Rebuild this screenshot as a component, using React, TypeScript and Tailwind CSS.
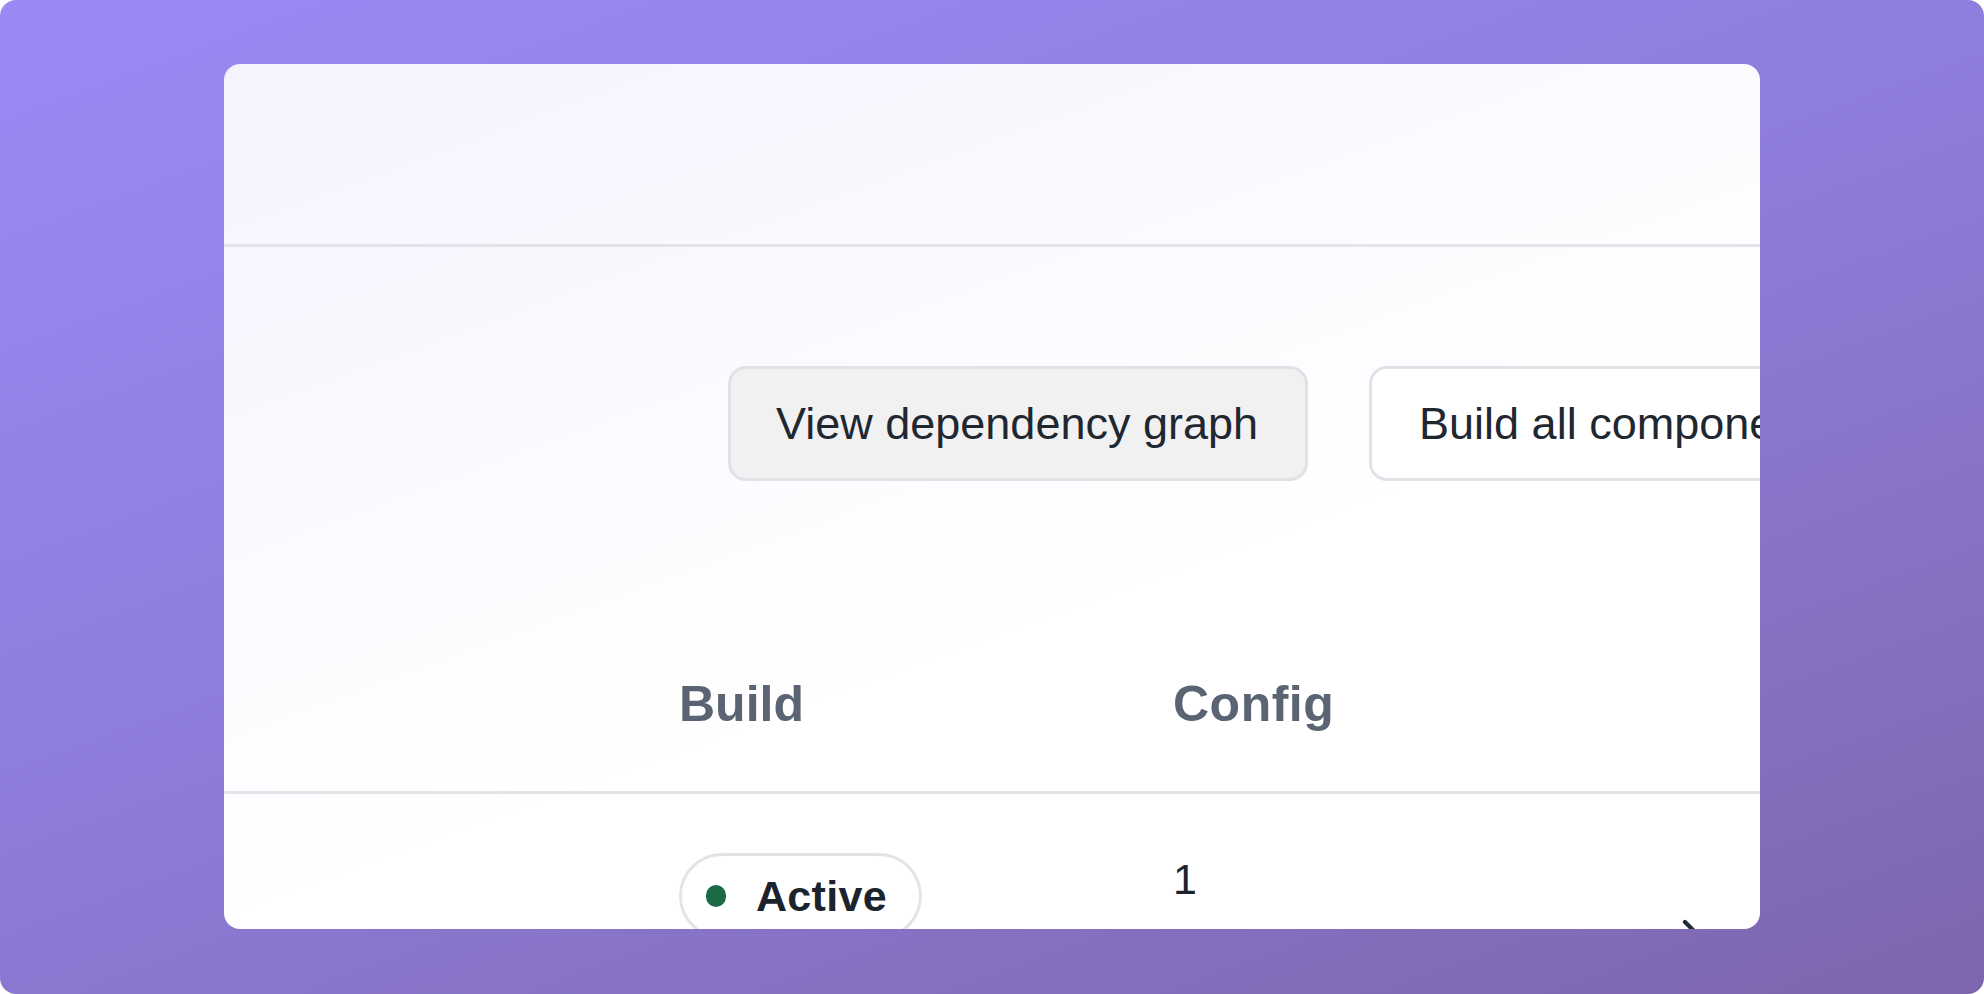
import React from 'react';

const ChevronRight: React.FC = () => (
  <svg width="40" height="40" viewBox="0 0 24 24" fill="none" stroke="#1f2933" strokeWidth="2.5" strokeLinecap="round" strokeLinejoin="round">
    <path d="m9 18 6-6-6-6" />
  </svg>
);

const App: React.FC = () => {
  return (
    <div className="w-[1984px] h-[994px] bg-white overflow-hidden font-['Liberation_Sans',Arial,sans-serif]">
      <div className="w-full h-full rounded-[16px] bg-[linear-gradient(160deg,#9a8af5_0%,#8f7ddc_45%,#7e66ad_100%)] pl-[224px] pt-[64px]">
        {/* Zoomed app card */}
        <div className="w-[1536px] h-[865px] rounded-[16px] overflow-hidden bg-[linear-gradient(160deg,#f5f3fd_0%,#fbfaff_35%,#ffffff_60%)] flex flex-col">
          {/* Top bar */}
          <div className="h-[183px] shrink-0 border-b-[3px] border-[#e1e5e9]" />

          {/* Toolbar */}
          <div className="pt-[119px] pl-[504px] flex gap-[61px] shrink-0">
            <button className="shrink-0 h-[115px] pl-[45px] pr-[47px] rounded-[18px] border-[3px] border-[#dfe3e7] bg-[#f1f1f2] text-[45px] text-[#1f2731] whitespace-nowrap">
              View dependency graph
            </button>
            <button className="shrink-0 h-[115px] px-[47px] rounded-[18px] border-[3px] border-[#dfe3e7] bg-white text-[45px] text-[#1f2731] whitespace-nowrap">
              Build all components
            </button>
          </div>

          {/* Table header */}
          <div className="h-[313px] shrink-0 border-b-[3px] border-[#e1e5e9] flex items-end pb-[62px] pl-[455px] text-[50px] leading-none font-bold text-[#5a6472]">
            <div className="w-[494px] shrink-0">Build</div>
            <div className="shrink-0 tracking-[0.5px]">Config</div>
          </div>

          {/* Row */}
          <div className="flex pl-[455px] pt-[59px]">
            <div className="w-[494px] shrink-0">
              <div className="inline-flex items-center h-[86px] pl-[24px] pr-[32px] rounded-full border-[3px] border-[#e2e5e8] bg-white">
                <span className="w-[20px] h-[22px] rounded-full bg-[#1b6a46]" />
                <span className="ml-[30px] text-[43px] font-bold text-[#1b232d] leading-none tracking-[0.3px]">Active</span>
              </div>
            </div>
            <div className="w-[497px] shrink-0 pt-[5px] text-[43px] leading-none text-[#1b232d]">1</div>
            <div className="shrink-0 pt-[59px]">
              <ChevronRight />
            </div>
          </div>
        </div>
      </div>
    </div>
  );
};

export default App;
